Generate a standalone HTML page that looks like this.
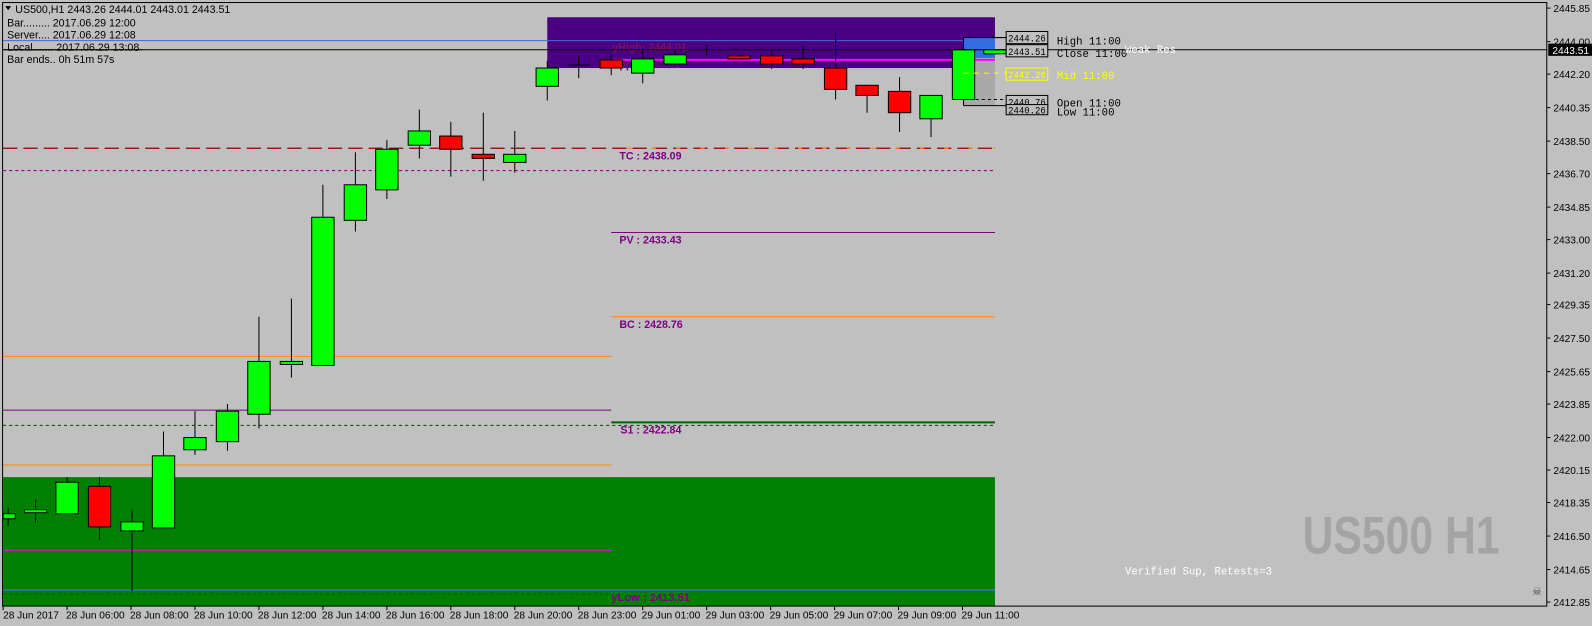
<!DOCTYPE html>
<html><head><meta charset="utf-8"><style>
html,body{margin:0;padding:0;background:#c0c0c0;}
svg{display:block}
.t{font-family:"Liberation Sans",sans-serif;font-size:10.5px;fill:#000}
.m{font-family:"Liberation Mono",monospace;font-size:10.5px}
.b{font-family:"Liberation Mono",monospace;font-size:9.8px}
.p{font-family:"Liberation Sans",sans-serif;font-size:10.5px;font-weight:bold;fill:#800080}
</style></head><body>
<svg width="1592" height="626" viewBox="0 0 1568 616.6" xmlns="http://www.w3.org/2000/svg">
<rect width="1568" height="617" fill="#c0c0c0"/>
<rect x="539" y="17" width="441" height="50" fill="#4b0082"/>
<rect x="3" y="470" width="977" height="127" fill="#008000"/>
<rect x="949" y="37" width="31" height="20" fill="#2f6fe0"/>
<rect x="949" y="57" width="31" height="47" fill="#a9a9a9"/>
<line x1="3" y1="40" x2="980" y2="40" stroke="#4169e1" stroke-width="1"/>
<line x1="602" y1="59" x2="980" y2="59" stroke="#ff00ff" stroke-width="2"/>
<line x1="3" y1="146" x2="980" y2="146" stroke="#8b0000" stroke-width="1.2" stroke-dasharray="14,6"/>
<line x1="602" y1="146" x2="980" y2="146" stroke="#ff8c00" stroke-width="1.2" stroke-dasharray="4,20" stroke-dashoffset="-16"/>
<line x1="3" y1="168" x2="980" y2="168" stroke="#990099" stroke-dasharray="3,3"/>
<line x1="602" y1="229" x2="980" y2="229" stroke="#800080"/>
<line x1="602" y1="312" x2="980" y2="312" stroke="#ff8c00"/>
<line x1="3" y1="351" x2="602" y2="351" stroke="#ff8c00"/>
<line x1="3" y1="404" x2="602" y2="404" stroke="#800080"/>
<line x1="602" y1="416" x2="980" y2="416" stroke="#006400" stroke-width="2"/>
<line x1="3" y1="419" x2="980" y2="419" stroke="#004000" stroke-dasharray="3,3"/>
<line x1="3" y1="458" x2="602" y2="458" stroke="#ff8c00"/>
<line x1="3" y1="542" x2="602" y2="542" stroke="#ff00ff"/>
<line x1="3" y1="581" x2="980" y2="581" stroke="#4169e1" stroke-width="1.5"/>
<line x1="3" y1="585" x2="602" y2="585" stroke="#006000" stroke-dasharray="3,3"/>
<text class="p" x="603" y="50" style="fill:#7a1060">yHigh: 2444.01</text>
<text class="p" x="610" y="67" style="fill:#5a1870">pp : 2443.01</text>
<text class="p" x="610" y="157">TC : 2438.09</text>
<text class="p" x="610" y="240">PV : 2433.43</text>
<text class="p" x="610" y="323">BC : 2428.76</text>
<text class="p" x="611" y="427">S1 : 2422.84</text>
<text class="p" x="602" y="592" style="font-size:11px">yLow : 2413.51</text>
<g stroke="#000" stroke-width="1">
<line x1="8" y1="500" x2="8" y2="518"/><rect x="3" y="506" width="12" height="5" fill="#00ff00"/>
<line x1="35" y1="492" x2="35" y2="515"/><rect x="24" y="502" width="22" height="3" fill="#00ff00"/>
<line x1="66" y1="470" x2="66" y2="506"/><rect x="55" y="475" width="22" height="31" fill="#00ff00"/>
<line x1="98" y1="470" x2="98" y2="532"/><rect x="87" y="479" width="22" height="40" fill="#ff0000"/>
<line x1="130" y1="502" x2="130" y2="582"/><rect x="119" y="514" width="22" height="9" fill="#00ff00"/>
<line x1="161" y1="425" x2="161" y2="520"/><rect x="150" y="449" width="22" height="71" fill="#00ff00"/>
<line x1="192" y1="405" x2="192" y2="448"/><rect x="181" y="431" width="22" height="12" fill="#00ff00"/>
<line x1="224" y1="398" x2="224" y2="444"/><rect x="213" y="405" width="22" height="30" fill="#00ff00"/>
<line x1="255" y1="312" x2="255" y2="422"/><rect x="244" y="356" width="22" height="52" fill="#00ff00"/>
<line x1="287" y1="294" x2="287" y2="372"/><rect x="276" y="356" width="22" height="3" fill="#00ff00"/>
<line x1="318" y1="182" x2="318" y2="360"/><rect x="307" y="214" width="22" height="146" fill="#00ff00"/>
<line x1="350" y1="150" x2="350" y2="228"/><rect x="339" y="182" width="22" height="35" fill="#00ff00"/>
<line x1="381" y1="138" x2="381" y2="196"/><rect x="370" y="147" width="22" height="40" fill="#00ff00"/>
<line x1="413" y1="108" x2="413" y2="156"/><rect x="402" y="129" width="22" height="14" fill="#00ff00"/>
<line x1="444" y1="120" x2="444" y2="174"/><rect x="433" y="134" width="22" height="13" fill="#ff0000"/>
<line x1="476" y1="111" x2="476" y2="178"/><rect x="465" y="152" width="22" height="4" fill="#ff0000"/>
<line x1="507" y1="129" x2="507" y2="170"/><rect x="496" y="152" width="22" height="8" fill="#00ff00"/>
<line x1="539" y1="60" x2="539" y2="99"/><rect x="528" y="67" width="22" height="18" fill="#00ff00"/>
<line x1="570" y1="55" x2="570" y2="77"/><line x1="559" y1="64" x2="581" y2="64"/>
<line x1="602" y1="54" x2="602" y2="74"/><rect x="591" y="59" width="22" height="8" fill="#ff0000"/>
<line x1="633" y1="50" x2="633" y2="82"/><rect x="622" y="58" width="22" height="14" fill="#00ff00"/>
<line x1="665" y1="50" x2="665" y2="63"/><rect x="654" y="54" width="22" height="9" fill="#00ff00"/>
<line x1="696" y1="44" x2="696" y2="55"/>
<rect x="717" y="55" width="22" height="3" fill="#ff0000"/>
<line x1="760" y1="50" x2="760" y2="68"/><rect x="749" y="55" width="22" height="8" fill="#ff0000"/>
<line x1="791" y1="45" x2="791" y2="68"/><rect x="780" y="58" width="22" height="5" fill="#ff0000"/>
<line x1="823" y1="32" x2="823" y2="98"/><rect x="812" y="67" width="22" height="21" fill="#ff0000"/>
<line x1="854" y1="84" x2="854" y2="111"/><rect x="843" y="84" width="22" height="10" fill="#ff0000"/>
<line x1="886" y1="76" x2="886" y2="130"/><rect x="875" y="90" width="22" height="21" fill="#ff0000"/>
<line x1="917" y1="94" x2="917" y2="135"/><rect x="906" y="94" width="22" height="23" fill="#00ff00"/>
<line x1="949" y1="37" x2="991" y2="37"/>
<line x1="949" y1="104" x2="991" y2="104"/>
<line x1="949" y1="98" x2="991" y2="98" stroke-dasharray="3,3"/>
<line x1="949" y1="37" x2="949" y2="104"/>
<rect x="938" y="49" width="22" height="49" fill="#00ff00"/>
<rect x="969" y="49" width="22" height="4" fill="#00ff00"/>
</g>
<line x1="949" y1="72" x2="991" y2="72" stroke="#ffff00" stroke-dasharray="5,5"/>
<line x1="3" y1="49" x2="1524" y2="49" stroke="#000"/>
<g class="b">
<rect x="991" y="31" width="41" height="12" fill="#c0c0c0" stroke="#000"/><text x="993" y="41" fill="#000" textLength="37" lengthAdjust="spacingAndGlyphs">2444.26</text>
<rect x="991" y="44" width="41" height="12" fill="#c0c0c0" stroke="#000"/><text x="993" y="54" fill="#000" textLength="37" lengthAdjust="spacingAndGlyphs">2443.51</text>
<rect x="991" y="67" width="41" height="12" fill="#c0c0c0" stroke="#ffff00"/><text x="993" y="77" fill="#ffff00" textLength="37" lengthAdjust="spacingAndGlyphs">2442.26</text>
<rect x="991" y="94" width="41" height="12" fill="#c0c0c0" stroke="#000"/><text x="993" y="104" fill="#000" textLength="37" lengthAdjust="spacingAndGlyphs">2440.76</text>
<rect x="991" y="103" width="41" height="10" fill="#c0c0c0" stroke="#000"/><text x="993" y="112" fill="#000" textLength="37" lengthAdjust="spacingAndGlyphs">2440.26</text>
</g>
<g class="m">
<text x="1041" y="44" fill="#000">High 11:00</text>
<text x="1041" y="56" fill="#000">Close 11:00</text>
<text x="1108" y="52" fill="#fff">Weak Res</text>
<text x="1041" y="78" fill="#ffff00">Mid 11:00</text>
<text x="1041" y="105" fill="#000">Open 11:00</text>
<text x="1041" y="114" fill="#000">Low 11:00</text>
<text x="1108" y="566" fill="#fff">Verified Sup, Retests=3</text>
</g>
<text x="1283" y="545" style="font-family:'Liberation Sans',sans-serif;font-weight:bold;font-size:52px;fill:#a4a4a4" textLength="194" lengthAdjust="spacingAndGlyphs">US500 H1</text>
<text x="1509" y="586" style="font-size:11px;fill:#444">☠</text>
<path d="M5 6 L11 6 L8 10 Z" fill="#000"/>
<text class="t" x="15" y="13">US500,H1  2443.26 2444.01 2443.01 2443.51</text>
<text class="t" x="7" y="26">Bar......... 2017.06.29 12:00</text>
<text class="t" x="7" y="38">Server.... 2017.06.29 12:08</text>
<text class="t" x="7" y="50">Local....... 2017.06.29 13:08</text>
<rect x="3" y="50" width="130" height="4" fill="#c0c0c0"/>
<line x1="3" y1="49" x2="140" y2="49" stroke="#000"/>
<text class="t" x="7" y="62">Bar ends.. 0h 51m 57s</text>
<rect x="2.5" y="2.5" width="1521" height="594.5" fill="none" stroke="#000"/>
<g class="t" style="font-size:10px">
<text x="1530" y="12">2445.85</text>
<text x="1530" y="45">2444.00</text>
<text x="1530" y="77">2442.20</text>
<text x="1530" y="110">2440.35</text>
<text x="1530" y="143">2438.50</text>
<text x="1530" y="175">2436.70</text>
<text x="1530" y="208">2434.85</text>
<text x="1530" y="240">2433.00</text>
<text x="1530" y="273">2431.20</text>
<text x="1530" y="304">2429.35</text>
<text x="1530" y="337">2427.50</text>
<text x="1530" y="370">2425.65</text>
<text x="1530" y="402">2423.85</text>
<text x="1530" y="435">2422.00</text>
<text x="1530" y="467">2420.15</text>
<text x="1530" y="499">2418.35</text>
<text x="1530" y="532">2416.50</text>
<text x="1530" y="565">2414.65</text>
<text x="1530" y="597">2412.85</text>
</g>
<g stroke="#000">
<line x1="1524" y1="8" x2="1527" y2="8"/><line x1="1524" y1="41" x2="1527" y2="41"/><line x1="1524" y1="73" x2="1527" y2="73"/><line x1="1524" y1="106" x2="1527" y2="106"/><line x1="1524" y1="139" x2="1527" y2="139"/><line x1="1524" y1="171" x2="1527" y2="171"/><line x1="1524" y1="204" x2="1527" y2="204"/><line x1="1524" y1="236" x2="1527" y2="236"/><line x1="1524" y1="269" x2="1527" y2="269"/><line x1="1524" y1="300" x2="1527" y2="300"/><line x1="1524" y1="333" x2="1527" y2="333"/><line x1="1524" y1="366" x2="1527" y2="366"/><line x1="1524" y1="398" x2="1527" y2="398"/><line x1="1524" y1="431" x2="1527" y2="431"/><line x1="1524" y1="463" x2="1527" y2="463"/><line x1="1524" y1="495" x2="1527" y2="495"/><line x1="1524" y1="528" x2="1527" y2="528"/><line x1="1524" y1="561" x2="1527" y2="561"/><line x1="1524" y1="593" x2="1527" y2="593"/>
</g>
<rect x="1525" y="43" width="43" height="12" fill="#000"/>
<text class="t" x="1529" y="53" style="font-size:10px;fill:#fff">2443.51</text>
<g class="t" style="font-size:10px">
<text x="3" y="609">28 Jun 2017</text>
<text x="65" y="609">28 Jun 06:00</text>
<text x="128" y="609">28 Jun 08:00</text>
<text x="191" y="609">28 Jun 10:00</text>
<text x="254" y="609">28 Jun 12:00</text>
<text x="317" y="609">28 Jun 14:00</text>
<text x="380" y="609">28 Jun 16:00</text>
<text x="443" y="609">28 Jun 18:00</text>
<text x="506" y="609">28 Jun 20:00</text>
<text x="569" y="609">28 Jun 23:00</text>
<text x="632" y="609">29 Jun 01:00</text>
<text x="695" y="609">29 Jun 03:00</text>
<text x="758" y="609">29 Jun 05:00</text>
<text x="821" y="609">29 Jun 07:00</text>
<text x="884" y="609">29 Jun 09:00</text>
<text x="947" y="609">29 Jun 11:00</text>
</g>
<g stroke="#000">
<line x1="3" y1="597" x2="3" y2="601"/><line x1="66" y1="597" x2="66" y2="601"/><line x1="129" y1="597" x2="129" y2="601"/><line x1="192" y1="597" x2="192" y2="601"/><line x1="255" y1="597" x2="255" y2="601"/><line x1="318" y1="597" x2="318" y2="601"/><line x1="381" y1="597" x2="381" y2="601"/><line x1="444" y1="597" x2="444" y2="601"/><line x1="507" y1="597" x2="507" y2="601"/><line x1="570" y1="597" x2="570" y2="601"/><line x1="633" y1="597" x2="633" y2="601"/><line x1="696" y1="597" x2="696" y2="601"/><line x1="759" y1="597" x2="759" y2="601"/><line x1="822" y1="597" x2="822" y2="601"/><line x1="885" y1="597" x2="885" y2="601"/><line x1="948" y1="597" x2="948" y2="601"/>
</g>
</svg>
</body></html>
